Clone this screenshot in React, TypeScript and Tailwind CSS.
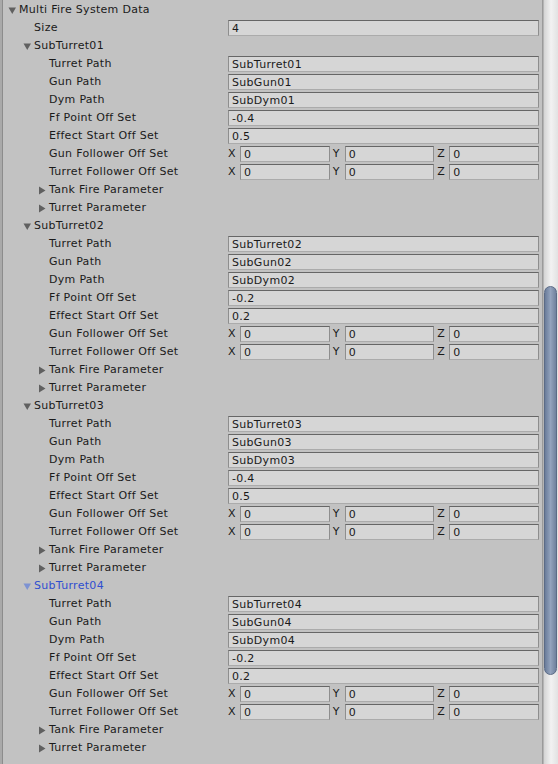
const turrets = [
  { name: "SubTurret01", gun: "SubGun01", dym: "SubDym01", ff: "-0.4", effect: "0.5" },
  { name: "SubTurret02", gun: "SubGun02", dym: "SubDym02", ff: "-0.2", effect: "0.2" },
  { name: "SubTurret03", gun: "SubGun03", dym: "SubDym03", ff: "-0.4", effect: "0.5" },
  { name: "SubTurret04", gun: "SubGun04", dym: "SubDym04", ff: "-0.2", effect: "0.2" },
];

function Arrow({ open, active }: { open: boolean; active?: boolean }) {
  const fill = active ? "#7d92d2" : "#606060";
  return (
    <svg width="9" height="9" viewBox="0 0 9 9" className="shrink-0">
      {open ? <polygon points="0.5,1.5 8,1.5 4.25,8" fill={fill} /> : <polygon points="1,0.5 7.5,4.5 1,8.5" fill={fill} />}
    </svg>
  );
}

// label column is 225px wide so every field lines up with the reference
function Label({ level, children }: { level: number; children: React.ReactNode }) {
  const pad = ["pl-[16px]", "pl-[31px]", "pl-[46px]"][level];
  return <div className={`w-[225px] shrink-0 truncate ${pad}`}>{children}</div>;
}

function Foldout({ level, open, active, children }: { level: number; open: boolean; active?: boolean; children: React.ReactNode }) {
  const pad = ["pl-[5px]", "pl-[20px]", "pl-[35px]"][level];
  return (
    <div className={`flex h-[18px] items-center ${pad}`}>
      <Arrow open={open} active={active} />
      <span className={`ml-[2px] ${active ? "text-[#2f4fd0]" : ""}`}>{children}</span>
    </div>
  );
}

function Box({ value }: { value: string }) {
  return (
    <div className="flex h-[16px] min-w-0 flex-1 items-center border border-[#8e8e8e] border-t-[#666666] border-b-[#ababab] bg-[#d6d6d6] pl-[3px] leading-none">
      {value}
    </div>
  );
}

function TextRow({ label, value, level = 2 }: { label: string; value: string; level?: number }) {
  return (
    <div className="flex h-[18px] items-center pr-[3px]">
      <Label level={level}>{label}</Label>
      <Box value={value} />
    </div>
  );
}

function VectorRow({ label }: { label: string }) {
  return (
    <div className="flex h-[18px] items-center pr-[3px]">
      <Label level={2}>{label}</Label>
      <div className="grid flex-1 grid-cols-3 gap-[3px]">
        {["X", "Y", "Z"].map((axis) => (
          <div key={axis} className="flex items-center">
            <span className="w-[12px] shrink-0">{axis}</span>
            <Box value="0" />
          </div>
        ))}
      </div>
    </div>
  );
}

export default function App() {
  return (
    <div className="flex h-[764px] w-[558px] overflow-hidden bg-[#c2c2c2] text-[11px] tracking-[0.3px] text-[#1a1a1a] [font-family:'DejaVu_Sans',Verdana,sans-serif]">
      {/* Left inspector edge */}
      <div className="w-[2px] shrink-0 bg-[#a9a9a9]" />
      <div className="w-[1px] shrink-0 bg-[#8c8c8c]" />

      {/* Property list */}
      <div className="min-w-0 flex-1 pt-[1px]">
        <Foldout level={0} open>
          Multi Fire System Data
        </Foldout>
        <TextRow label="Size" value="4" level={1} />

        {turrets.map((t, i) => (
          <div key={t.name}>
            <Foldout level={1} open active={i === 3}>
              {t.name}
            </Foldout>
            <TextRow label="Turret Path" value={t.name} />
            <TextRow label="Gun Path" value={t.gun} />
            <TextRow label="Dym Path" value={t.dym} />
            <TextRow label="Ff Point Off Set" value={t.ff} />
            <TextRow label="Effect Start Off Set" value={t.effect} />
            <VectorRow label="Gun Follower Off Set" />
            <VectorRow label="Turret Follower Off Set" />
            <Foldout level={2} open={false}>
              Tank Fire Parameter
            </Foldout>
            <Foldout level={2} open={false}>
              Turret Parameter
            </Foldout>
          </div>
        ))}
      </div>

      {/* Scrollbar */}
      <div className="flex w-[16px] shrink-0">
        <div className="w-[1px] bg-[#9a9a9a]" />
        <div className="w-[1px] bg-[#b4b4b4]" />
        <div className="flex-1 bg-linear-to-r from-[#d4d4d4] via-[#f2f2f2] to-[#e2e2e2]">
          <div className="mt-[286px] h-[389px] w-[13px] rounded-full border border-[#5b6b86] bg-linear-to-r from-[#6a7c9a] via-[#93a3bd] to-[#70819d]" />
        </div>
      </div>
    </div>
  );
}
